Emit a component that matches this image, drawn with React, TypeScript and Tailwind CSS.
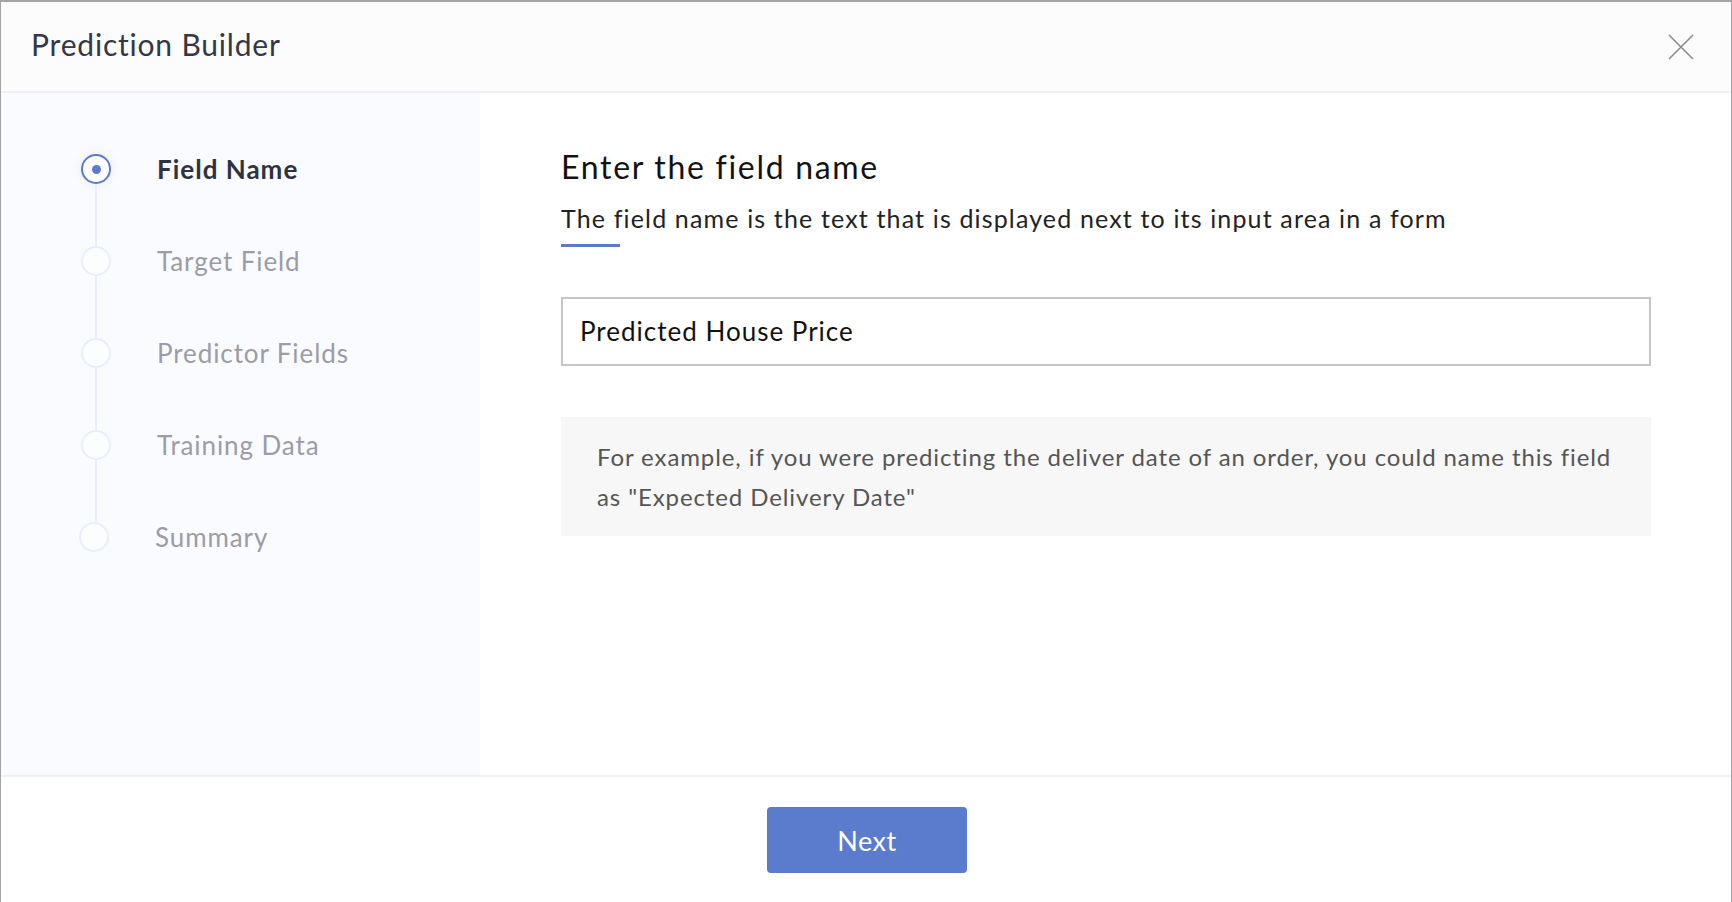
import React from "react";

const steps = [
  { label: "Field Name", active: true },
  { label: "Target Field", active: false },
  { label: "Predictor Fields", active: false },
  { label: "Training Data", active: false },
  { label: "Summary", active: false },
];

export default function App() {
  return (
    <div className="w-[1732px] h-[902px] flex flex-col bg-white border-t-2 border-l border-r border-[#a3a3a7] font-['Lato',sans-serif] overflow-hidden">
      <header className="h-[91px] shrink-0 bg-[#fcfcfc] border-b-2 border-[#f0f0f3] flex items-center justify-between pl-[30px] pr-[37px] pb-[4px]">
        <h1 className="text-[30px] tracking-[0.8px] text-[#343744]">Prediction Builder</h1>
        <button className="w-[26px] h-[26px] flex items-center justify-center mt-[5px]">
          <svg width="26" height="26" viewBox="0 0 26 26">
            <path d="M1 1 L25 25 M25 1 L1 25" stroke="#8c8c8e" strokeWidth="1.6" fill="none" />
          </svg>
        </button>
      </header>
      <div className="flex flex-1 min-h-0">
        <aside className="w-[479px] shrink-0 bg-[#fafbfe] pt-[61px] pl-[80px]">
          {steps.map((s, i) => (
            <div key={s.label} className={`flex items-start ${i === steps.length - 1 ? "-ml-[2px]" : ""}`}>
              <div className="flex flex-col items-center w-[30px]">
                {s.active ? (
                  <div className="w-[30px] h-[30px] rounded-full border-2 border-[#5a7bcd] bg-white flex items-center justify-center shadow-[0_0_10px_rgba(90,123,205,0.12)]">
                    <div className="w-[9px] h-[9px] rounded-full bg-[#5a7bcd]" />
                  </div>
                ) : (
                  <div className="w-[30px] h-[30px] rounded-full border-2 border-[#e9eefa] bg-[#fcfdff]" />
                )}
                {i < steps.length - 1 && <div className="w-[2px] h-[62px] bg-[#e9eefa]" />}
              </div>
              <span
                className={`ml-[46px] leading-[30px] text-[26px] ${
                  s.active ? "font-bold tracking-[1px] text-[#2f3240]" : "tracking-[0.9px] text-[#9b9ca7]"
                }`}
              >
                {s.label}
              </span>
            </div>
          ))}
        </aside>
        <main className="flex-1 pl-[81px] pr-[80px] pt-[52px]">
          <h2 className="text-[32px] leading-[44px] tracking-[1.7px] text-[#121212]">Enter the field name</h2>
          <p className="mt-[12px] text-[25px] leading-[34px] tracking-[1.15px] text-[#222]">
            The field name is the text that is displayed next to its input area in a form
          </p>
          <div className="mt-[9px] w-[59px] h-[3px] bg-[#5a7bcd]" />
          <div className="mt-[50px] h-[69px] border-2 border-[#c4c5cc] flex items-center px-[17px]">
            <span className="text-[26px] tracking-[1px] text-[#111]">Predicted House Price</span>
          </div>
          <div className="mt-[51px] h-[119px] bg-[#f7f7f7] px-[36px] flex items-center">
            <p className="text-[24px] leading-[40px] tracking-[0.9px] text-[#555] whitespace-nowrap">
              For example, if you were predicting the deliver date of an order, you could name this field
              <br />
              as "Expected Delivery Date"
            </p>
          </div>
        </main>
      </div>
      <footer className="h-[127px] shrink-0 border-t-2 border-[#f0f0f3] flex items-center justify-center">
        <button className="ml-[2px] w-[200px] h-[66px] rounded-[4px] bg-[#5b7bcc] text-white text-[27px] tracking-[0.5px] pt-[4px]">Next</button>
      </footer>
    </div>
  );
}
